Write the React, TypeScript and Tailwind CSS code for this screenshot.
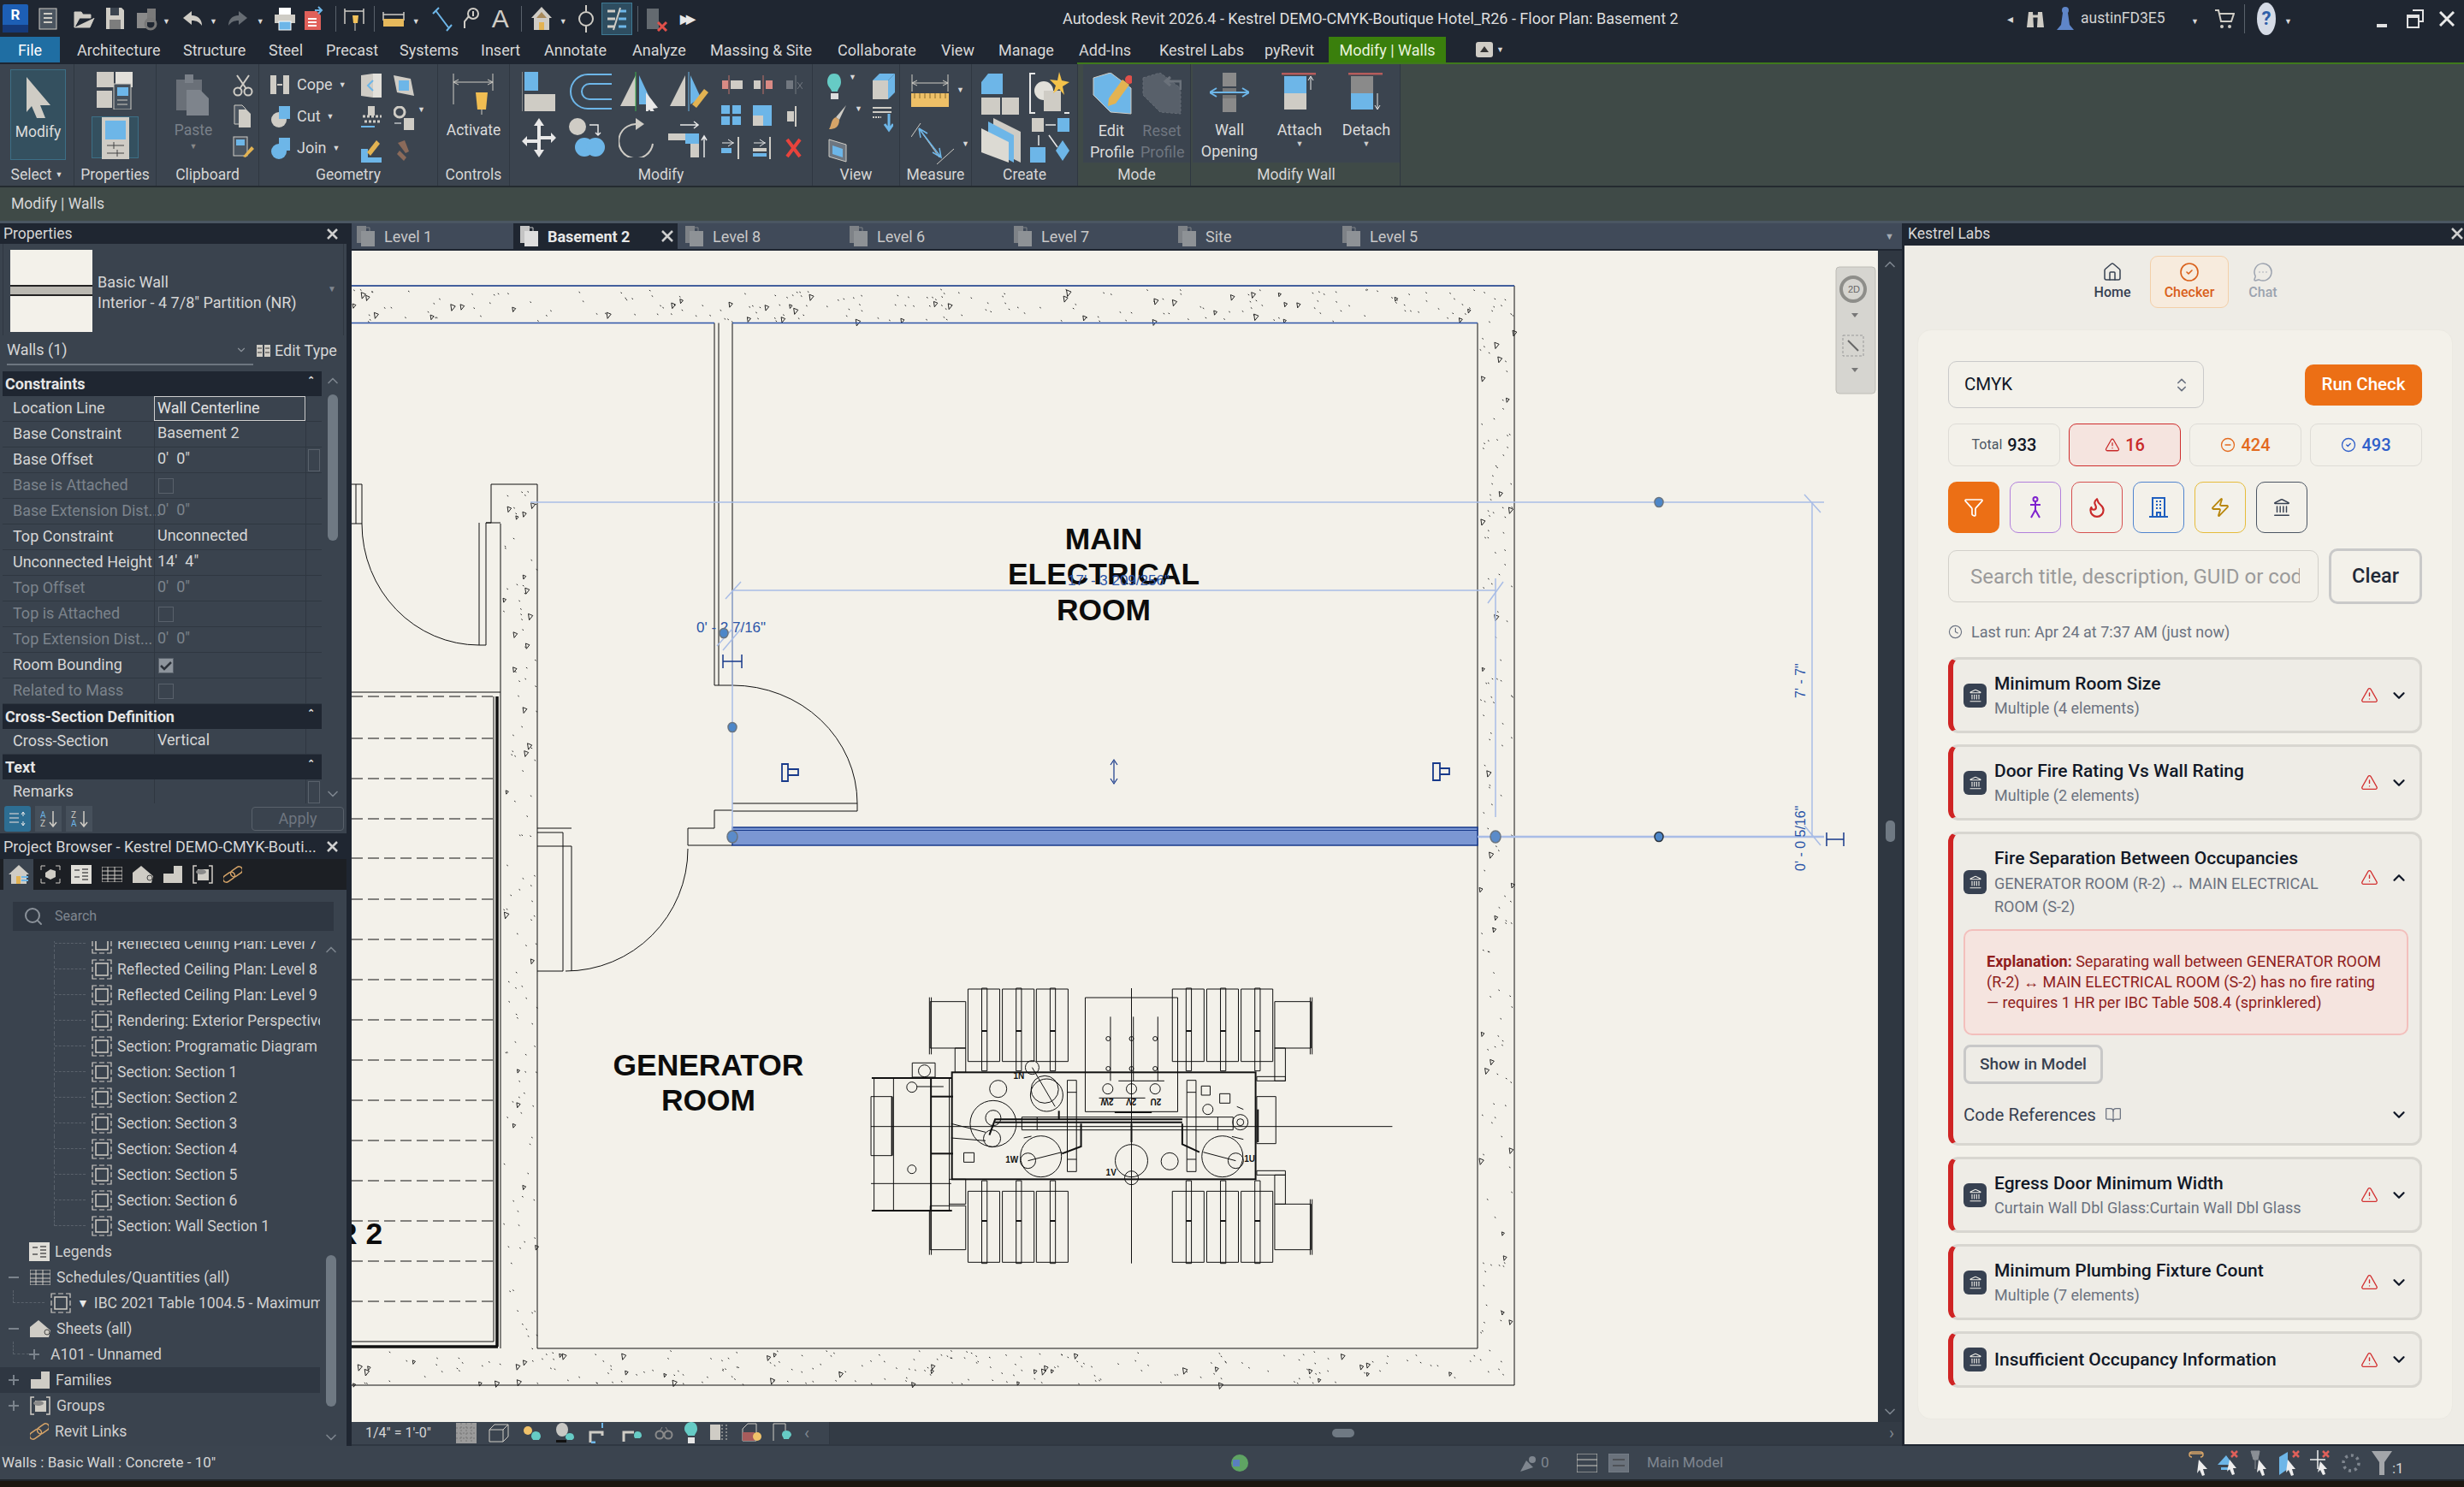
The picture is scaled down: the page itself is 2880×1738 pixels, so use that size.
import type { ReactNode } from "react";
import {
  BookOpen, ChevronDown, ChevronsUpDown, ChevronUp, CircleCheck, CircleMinus, Clock,
  Flame, Funnel, House, Landmark, MessageCircleMore, Search, TriangleAlert, Zap,
} from "lucide-react";

const G = "#cfccc5";
const B = "#6db6e8";

function Ic({ w, h, children, className }: { w: number; h: number; children: ReactNode; className?: string }) {
  return (
    <svg width={w} height={h} viewBox={`0 0 ${w} ${h}`} className={`shrink-0 ${className ?? ""}`}>
      {children}
    </svg>
  );
}

const Caret = () => <span className="text-[9px] leading-none text-[#d9d9d9]">▼</span>;

/* ---------- quick access toolbar ---------- */
function Qat() {
  return (
    <div className="flex h-full w-[830px] items-center pl-[3px]">
      <div className="flex h-[33px] w-[30px] flex-col items-center rounded-[2px] bg-[#1d5fb5]">
        <span className="mt-[1px] text-[17px] font-bold leading-[22px] text-white">R</span>
        <span className="mt-auto h-[9px] w-full bg-[#153a7a]" />
      </div>
      <Ic w={22} h={26} className="ml-[12px]"><rect x="1" y="1" width="20" height="24" fill="#4b5560" stroke={G} /><path d="M6 7h10M6 12h10M6 17h10" stroke={G} strokeWidth="2" /></Ic>
      <Ic w={26} h={24} className="ml-[18px]"><path d="M2 22V4h8l2 3h9v4H8L2 22h18l5-11" fill={G} stroke={G} /></Ic>
      <Ic w={23} h={27} className="ml-[12px]"><path d="M1 1h18l3 3v22H1z" fill={G} /><rect x="6" y="1" width="10" height="9" fill="#3b444f" /><rect x="5" y="15" width="13" height="11" fill="#7d7d7d" /></Ic>
      <Ic w={30} h={28} className="ml-[12px]"><rect x="2" y="7" width="12" height="18" fill="#8a8a8a" /><rect x="14" y="2" width="10" height="16" fill="#7a7a7a" /><circle cx="18" cy="20" r="6" fill="none" stroke="#777" strokeWidth="3" /></Ic>
      <span className="ml-[2px]"><Caret /></span>
      <Ic w={25} h={20} className="ml-[14px]"><path d="M11 1 1 9l10 8v-5c6 0 9 2 12 6 0-7-4-12-12-12z" fill={G} /></Ic>
      <span className="ml-[7px]"><Caret /></span>
      <Ic w={25} h={20} className="ml-[11px]"><path d="M14 1l10 8-10 8v-5C8 12 5 14 2 18 2 11 6 6 14 6z" fill="#666c73" /></Ic>
      <span className="ml-[10px]"><Caret /></span>
      <Ic w={26} h={28} className="ml-[11px]"><rect x="6" y="1" width="14" height="8" fill="#fff" /><rect x="1" y="9" width="24" height="10" fill={G} /><rect x="6" y="17" width="14" height="10" fill={B} stroke="#fff" /></Ic>
      <Ic w={25} h={29} className="ml-[9px]"><path d="M1 6h14l5 5v17H1z" fill="#e0605a" /><path d="M5 15h10M5 19h10M5 23h10" stroke="#fff" strokeWidth="2" /><path d="M13 5h8m-4-4 4 4-4 4" stroke={B} strokeWidth="2" fill="none" /></Ic>
      <span className="ml-[12px] h-[30px] w-px bg-[#59616b]" />
      <Ic w={24} h={32} className="ml-[9px]"><path d="M1 4v18M23 4v18M1 7h22" stroke={G} fill="none" strokeWidth="1.5" /><path d="M10 12h7l-1 9h-5z" fill="#f3c25a" /><path d="M13 21v9" stroke={G} /></Ic>
      <span className="ml-[11px] h-[30px] w-px bg-[#59616b]" />
      <Ic w={26} h={26} className="ml-[9px]"><path d="M1 5v10M25 5v10M1 8h24" stroke={G} fill="none" strokeWidth="1.5" /><rect x="1" y="13" width="24" height="9" fill="#e6b95c" /></Ic>
      <span className="ml-[9px]"><Caret /></span>
      <Ic w={24} h={30} className="ml-[14px]"><path d="M1 9 8 2M23 22l-6 7M4 5l15 20" stroke={B} strokeWidth="2" fill="none" /></Ic>
      <Ic w={20} h={30} className="ml-[11px]"><circle cx="13" cy="9" r="6" fill="none" stroke={G} strokeWidth="2" /><path d="M8 12 3 18v8M13 6v6" stroke={G} strokeWidth="2" fill="none" /></Ic>
      <span className="ml-[15px] w-[22px] font-['Liberation_Sans',sans-serif] text-[30px] leading-none text-[#cfccc5]">A</span>
      <span className="ml-[12px] h-[30px] w-px bg-[#59616b]" />
      <Ic w={26} h={30} className="ml-[10px]"><path d="M13 1 1 14h3v14h18V14h3z" fill={G} /><path d="M7 14 13 7l6 7" fill="#a88a5b" /><rect x="10" y="19" width="6" height="9" fill="#e3b352" /></Ic>
      <span className="ml-[8px]"><Caret /></span>
      <Ic w={20} h={34} className="ml-[12px]"><circle cx="10" cy="17" r="8" fill="none" stroke={G} strokeWidth="2" /><path d="M10 1v7M10 26v7" stroke={G} strokeWidth="2" /></Ic>
      <div className="ml-[8px] flex h-[38px] w-[36px] items-center justify-center border border-[#3e7a94] bg-[#2e4d60]">
        <Ic w={24} h={28}><path d="M1 5h9M1 14h9M1 23h9" stroke={G} strokeWidth="3" /><path d="M14 5h9M14 14h9M14 23h9" stroke={B} strokeWidth="3" /><path d="M16 1 8 27" stroke={G} strokeWidth="2" /></Ic>
      </div>
      <span className="ml-[6px] h-[30px] w-px bg-[#59616b]" />
      <Ic w={26} h={30} className="ml-[9px]"><rect x="1" y="3" width="14" height="24" fill="#646a70" /><path d="M14 19l10 10m0-10-10 10" stroke="#e0504a" strokeWidth="3" /></Ic>
      <span className="ml-[14px] text-[14px] font-bold leading-none tracking-[-4px] text-[#e8e8e8]">▶▶</span>
    </div>
  );
}

function TopRight() {
  return (
    <div className="flex h-full flex-1 items-center">
      <span className="ml-[384px] text-[14px] leading-none text-[#d8d8d8]">◂</span>
      <Ic w={24} h={22} className="ml-[14px]"><path d="M2 21 4 3h5l1 18zM14 21l1-18h5l2 18z" fill={G} /><path d="M9 8h6" stroke={G} strokeWidth="3" /></Ic>
      <Ic w={22} h={30} className="ml-[12px]"><circle cx="11" cy="5" r="4" fill="#5f86c9" /><path d="M8 8h6l2 14 5 6H1l5-6z" fill="#5f86c9" /></Ic>
      <span className="ml-[7px] w-[99px] text-[17.5px] text-[#d2d2d2]">austinFD3E5</span>
      <span className="ml-[30px]"><Caret /></span>
      <Ic w={24} h={24} className="ml-[18px]"><path d="M1 2h4l3 13h12l3-9H6" fill="none" stroke={G} strokeWidth="2" /><circle cx="9" cy="21" r="2" fill={G} /><circle cx="18" cy="21" r="2" fill={G} /></Ic>
      <span className="ml-[11px] h-[34px] w-px bg-[#59616b]" />
      <div className="ml-[14px] flex h-[38px] w-[22px] items-center justify-center rounded-[50%] bg-[#d5dbe6] text-[22px] font-bold text-[#2e5ea8]">?</div>
      <span className="ml-[10px]"><Caret /></span>
      <span className="ml-[99px] mt-[16px] h-[4px] w-[12px] bg-[#e2e2e2]" />
      <Ic w={20} h={22} className="ml-[23px]"><path d="M7 1h12v13h-4M1 7h13v14H1zM1 9h13" fill="none" stroke="#e2e2e2" strokeWidth="2" /></Ic>
      <Ic w={18} h={18} className="ml-[18px]"><path d="M1 1l16 16M17 1 1 17" stroke="#e8e8e8" strokeWidth="3" /></Ic>
    </div>
  );
}

/* ---------- ribbon tabs ---------- */
const leftTabs = [
  { t: "Architecture", c: "w-[124px]" }, { t: "Structure", c: "w-[100px]" }, { t: "Steel", c: "w-[67px]" },
  { t: "Precast", c: "w-[86px]" }, { t: "Systems", c: "w-[95px]" }, { t: "Insert", c: "w-[74px]" },
  { t: "Annotate", c: "w-[103px]" }, { t: "Analyze", c: "w-[91px]" }, { t: "Massing & Site", c: "w-[149px]" },
  { t: "Collaborate", c: "w-[121px]" }, { t: "View", c: "w-[67px]" }, { t: "Manage", c: "w-[92px]" },
];
const rightTabs = [
  { t: "Add-Ins", c: "w-[94px]" }, { t: "Kestrel Labs", c: "w-[123px]" }, { t: "pyRevit", c: "w-[75px]" },
];

function RibbonTabs() {
  return (
    <div className="flex h-[32px] text-[18px] text-[#d8d8d8]">
      <div className="flex w-[1259px] items-start">
        <div className="flex h-[30px] w-[70px] items-center justify-center bg-[#1f6ea3] text-white">File</div>
        <div className="ml-[20px] flex h-[30px] items-center">
          {leftTabs.map((x) => <span key={x.t} className={x.c}>{x.t}</span>)}
        </div>
      </div>
      <div className="flex flex-1 border-b-[2px] border-[#3f7a1c]">
        <div className="ml-[2px] flex h-[30px] items-center">
          {rightTabs.map((x) => <span key={x.t} className={x.c}>{x.t}</span>)}
        </div>
        <div className="flex h-[30px] w-[137px] items-center justify-center bg-[#3a7f0c] text-[#e8f3dc]">Modify | Walls</div>
        <div className="ml-[35px] flex h-[30px] items-center gap-[4px]">
          <Ic w={20} h={20}><rect x="0" y="1" width="20" height="18" rx="3" fill={G} /><path d="M10 6l5 7H5z" fill="#333" /></Ic>
          <Caret />
        </div>
      </div>
    </div>
  );
}

/* ---------- ribbon panels ---------- */
function Panel({ w, label, children, ctx }: { w: string; label: ReactNode; children?: ReactNode; ctx?: boolean }) {
  return (
    <div className={`flex h-full shrink-0 flex-col border-r border-[#2f3741] ${w} ${ctx ? "bg-[#3f4a47]" : "bg-[#3b444f]"}`}>
      <div className="h-[115px] bg-[#3b444f]">{children}</div>
      <div className="flex h-[27px] items-center justify-center pt-[2px] text-[17.5px] text-[#d6d6d6]">{label}</div>
    </div>
  );
}

const Cut = () => <Ic w={24} h={26}><path d="M5 1l11 16M19 1 8 17" stroke={G} strokeWidth="2" /><circle cx="6" cy="20" r="4.5" fill="none" stroke={G} strokeWidth="2" /><circle cx="18" cy="20" r="4.5" fill="none" stroke={G} strokeWidth="2" /></Ic>;
const Copy = () => <Ic w={22} h={28}><path d="M2 1h9l4 4v18H2z" fill="#4b5560" stroke={G} /><path d="M7 6h9l5 5v16H7z" fill={G} /></Ic>;
const MatchProps = () => <Ic w={26} h={26}><rect x="1" y="1" width="16" height="22" fill="#4b5560" stroke={G} /><rect x="4" y="4" width="10" height="7" fill={B} /><path d="M12 24 22 12l3 3-10 10z" fill="#e3b352" /></Ic>;

function Ribbon() {
  return (
    <div className="flex h-[142px] bg-[#3f4a47]">
      <Panel w="w-[87px]" label={<span className="flex items-center gap-[4px]">Select <Caret /></span>}>
        <div className="pl-[12px] pt-[6px]">
          <div className="flex h-[106px] w-[65px] flex-col items-center border border-[#3c6f86] bg-[#34505f] pt-[8px]">
            <Ic w={32} h={48}><path d="M2 0l28 33H18l6 15h-10L8 34l-6 7z" fill={G} /></Ic>
            <span className="mt-[3px] text-[17.5px] text-[#dcdcdc]">Modify</span>
          </div>
        </div>
      </Panel>
      <Panel w="w-[96px]" label="Properties">
        <div className="flex flex-col items-center pt-[9px]">
          <Ic w={44} h={44}><rect x="0" y="0" width="20" height="18" fill={G} /><rect x="22" y="0" width="20" height="18" fill="#e2e0da" /><rect x="0" y="22" width="18" height="20" fill={G} /><rect x="20" y="14" width="20" height="30" fill="#45505b" stroke={G} /><rect x="24" y="18" width="13" height="10" fill={B} /><path d="M24 33h12M24 38h12" stroke={G} /></Ic>
          <div className="mt-[8px] flex h-[49px] w-[55px] items-start justify-center border border-[#3c6f86] bg-[#34505f]">
            <Ic w={40} h={49}><rect x="4" y="0" width="32" height="49" fill={G} /><rect x="8" y="4" width="24" height="22" fill={B} /><path d="M10 33h20M10 42h20M18 29v8M22 38v8" stroke="#444" /></Ic>
          </div>
        </div>
      </Panel>
      <Panel w="w-[120px]" label="Clipboard">
        <div className="flex pl-[22px] pt-[12px]">
          <div className="flex w-[42px] flex-col items-center">
            <Ic w={40} h={48}><rect x="0" y="6" width="30" height="36" fill="#6a7078" /><rect x="10" y="0" width="10" height="10" fill="#7a8088" /><path d="M12 18h16l10 10v20H12z" fill="#7e848c" /></Ic>
            <span className="mt-[4px] text-[17.5px] text-[#798089]">Paste</span>
            <span className="text-[9px] text-[#888]">▼</span>
          </div>
          <div className="ml-[25px] flex flex-col gap-[9px]"><Cut /><Copy /><MatchProps /></div>
        </div>
      </Panel>
      <Panel w="w-[209px]" label="Geometry">
        <div className="flex pl-[13px] pt-[11px]">
          <div className="flex w-[106px] flex-col gap-[11px] text-[18px] leading-[26px] text-[#d8d8d8]">
            <div className="flex items-center gap-[7px]">
              <Ic w={24} h={26}><rect x="0" y="2" width="7" height="22" fill={G} /><rect x="15" y="2" width="7" height="22" fill={G} /><path d="M8 13h6" stroke={G} strokeWidth="2" /></Ic>Cope<Caret />
            </div>
            <div className="flex items-center gap-[7px]">
              <Ic w={24} h={26}><circle cx="10" cy="17" r="9" fill={G} /><rect x="10" y="1" width="13" height="15" fill={B} /></Ic>Cut<Caret />
            </div>
            <div className="flex items-center gap-[7px]">
              <Ic w={24} h={26}><circle cx="10" cy="17" r="9" fill={B} /><rect x="10" y="1" width="13" height="15" fill={B} /></Ic>Join<Caret />
            </div>
          </div>
          <div className="flex w-[38px] flex-col gap-[10px]">
            <Ic w={24} h={28}><path d="M0 2 14 0v28L0 26z" fill={G} /><path d="M14 0h10v28H14z" fill="#e2e0da" /><path d="M14 8 8 14l6 6" stroke={B} strokeWidth="2" fill="none" /></Ic>
            <Ic w={24} h={28}><path d="M2 12h22M4 18h20" stroke={G} strokeWidth="3" strokeDasharray="3 2" /><rect x="8" y="0" width="8" height="11" fill={G} /><path d="M0 24h16" stroke={B} strokeWidth="2" /></Ic>
            <Ic w={24} h={28}><rect x="0" y="12" width="8" height="16" fill={B} /><path d="M8 22h16v6H8z" fill={B} /><path d="M7 16 18 2l4 4-11 14z" fill="#e3b352" /></Ic>
          </div>
          <div className="flex flex-col gap-[10px]">
            <Ic w={24} h={28}><path d="M0 2l20 4 4 20-20-4z" fill={G} /><rect x="6" y="8" width="12" height="12" fill={B} /></Ic>
            <span className="flex items-start gap-[4px]">
              <Ic w={24} h={28}><circle cx="7" cy="7" r="6" fill="none" stroke={G} strokeWidth="3" /><rect x="12" y="14" width="12" height="14" fill={G} /><path d="M1 20h8" stroke="#fff" /></Ic>
              <Caret />
            </span>
            <Ic w={24} h={28}><path d="M12 26 4 18l3-4 8 8z" fill="#8a6a5a" /><path d="M5 5l8-3 5 13-4 2z" fill="#8a6a5a" /></Ic>
          </div>
        </div>
      </Panel>
      <Panel w="w-[84px]" label="Controls">
        <div className="flex flex-col items-center pt-[11px]">
          <Ic w={52} h={48}><path d="M2 0v36M48 0v20M2 10h46M2 10l6-3M2 10l6 3M48 10l-6-3M48 10l-6 3" stroke={G} fill="none" /><path d="M28 22h14l-2 20H30z" fill="#f0bd52" /><path d="M35 42v6" stroke={G} /></Ic>
          <span className="mt-[5px] text-[17.5px] text-[#dcdcdc]">Activate</span>
        </div>
      </Panel>
      <Panel w="w-[354px]" label="Modify">
        <div className="flex pl-[14px] pt-[9px]">
          <div className="grid grid-cols-[55px_58px_58px_58px] grid-rows-[48px_48px] gap-y-[6px]">
            <Ic w={40} h={46}><path d="M0 0v46" stroke={G} /><rect x="3" y="0" width="16" height="22" fill={B} /><rect x="3" y="26" width="36" height="20" fill={G} /></Ic>
            <Ic w={50} h={46}><path d="M50 3H22a20 20 0 0 0 0 40h28M50 14H24a8 8 0 0 0 0 18h26" fill="none" stroke={B} strokeWidth="2" /></Ic>
            <Ic w={48} h={46}><path d="M20 4 2 40h18z" fill={G} /><path d="M20 0v48" stroke="#3bb04a" /><path d="M24 4l16 34H24z" fill={B} /><path d="M32 24l14 18-6 1 4 7-4 1-4-7-4 5z" fill="#e8e8e8" /></Ic>
            <Ic w={48} h={46}><path d="M20 4 2 40h18z" fill={G} /><path d="M24 0v46" stroke={B} /><path d="M26 4l12 26-12 8z" fill={B} /><path d="M28 38 42 20l5 4-14 18z" fill="#e3b352" /></Ic>
            <Ic w={40} h={46}><path d="M20 0l6 9h-4v12h12v-4l6 6-6 6v-4H22v12h4l-6 9-6-9h4V29H6v4l-6-6 6-6v4h12V9h-4z" fill="#e8e8e8" /></Ic>
            <Ic w={44} h={46}><circle cx="10" cy="10" r="10" fill={G} /><path d="M24 8h10v12m-3-3 3 3 3-3" stroke="#e8e8e8" strokeWidth="1.5" fill="none" /><circle cx="18" cy="34" r="11" fill={B} /><circle cx="31" cy="34" r="11" fill={B} /></Ic>
            <Ic w={44} h={46}><path d="M26 8A20 20 0 1 0 40 30" fill="none" stroke={G} strokeWidth="2" /><path d="M20 0l10 7-10 7z" fill={G} /></Ic>
            <Ic w={46} h={46}><path d="M0 18h30v8H0zM26 18h10v28h-10z" fill={G} /><rect x="20" y="18" width="16" height="12" fill={B} /><path d="M14 8h20m-4-4 5 4-5 4M42 46V22m-3 4 3-5 3 5" stroke="#e8e8e8" fill="none" strokeWidth="1.5" /></Ic>
          </div>
          <div className="ml-[4px] grid grid-cols-[37px_38px_30px] grid-rows-[30px_30px_30px] items-center gap-y-[7px]">
            <Ic w={26} h={22}><rect x="1" y="6" width="7" height="10" fill="#d98a84" /><rect x="11" y="6" width="14" height="10" fill={G} /><path d="M9 0v22" stroke="#c0706a" /></Ic>
            <Ic w={26} h={22}><rect x="1" y="6" width="8" height="10" fill={G} /><rect x="15" y="6" width="8" height="10" fill="#d98a84" /><path d="M12 0v22" stroke="#c0706a" /></Ic>
            <Ic w={20} h={22}><rect x="1" y="6" width="8" height="10" fill="#727880" /><path d="M12 0v22M14 8l6 8M20 8l-6 8" stroke="#727880" /></Ic>
            <Ic w={24} h={26}><rect x="0" y="0" width="10" height="10" fill={B} /><rect x="13" y="0" width="10" height="10" fill={B} /><rect x="0" y="13" width="10" height="10" fill={B} /><rect x="13" y="13" width="10" height="10" fill={B} /></Ic>
            <Ic w={24} h={26}><path d="M0 0h22v24H12V12H0z" fill={B} /><rect x="0" y="12" width="12" height="12" fill={G} /></Ic>
            <Ic w={20} h={24}><rect x="2" y="6" width="8" height="12" fill={G} /><path d="M12 0v24" stroke={G} strokeWidth="2" /></Ic>
            <Ic w={26} h={28}><path d="M1 8h14M8 4l6 4-6 4" stroke="#e8e8e8" fill="none" /><rect x="0" y="14" width="12" height="6" fill={B} /><path d="M20 1v26" stroke={G} strokeWidth="2" /></Ic>
            <Ic w={26} h={28}><path d="M1 8h14M8 4l6 4-6 4" stroke="#e8e8e8" fill="none" /><rect x="0" y="14" width="16" height="4" fill={G} /><rect x="0" y="20" width="16" height="4" fill={B} /><path d="M20 1v26" stroke={G} strokeWidth="2" /></Ic>
            <Ic w={20} h={26}><path d="M2 3l15 20M17 3 2 23" stroke="#e8433c" strokeWidth="4" /></Ic>
          </div>
        </div>
      </Panel>
      <Panel w="w-[102px]" label="View">
        <div className="ml-[17px] mt-[11px] grid grid-cols-[53px_30px] grid-rows-[36px_36px_36px] gap-y-[1px]">
          <span className="flex gap-[8px]">
            <Ic w={17} h={30}><path d="M8 0c6 0 8 5 8 10s-4 8-4 11H5c0-3-5-6-5-11S2 0 8 0z" fill="#66cbc5" /><rect x="4" y="23" width="9" height="7" fill="#ddd" /></Ic>
            <Caret />
          </span>
          <Ic w={26} h={30}><path d="M0 8h18v22H0z" fill={G} /><path d="M0 8l8-8h18L18 8z" fill={B} /><path d="M18 8l8-8v22l-8 8z" fill={B} /></Ic>
          <span className="flex gap-[8px]">
            <Ic w={24} h={30}><path d="M22 0 10 14l4 3z" fill={G} /><path d="M10 14c-6 2-5 10-8 14 6 0 12-2 12-11z" fill="#d6a468" /></Ic>
            <Caret />
          </span>
          <Ic w={24} h={32}><path d="M0 3h22M0 8h22" stroke={G} strokeWidth="2" /><path d="M0 14h10" stroke={G} strokeWidth="2" strokeDasharray="2 1" /><path d="M19 10v18m-5-6 5 7 5-7" stroke={B} strokeWidth="3" fill="none" /></Ic>
          <Ic w={24} h={32}><path d="M2 3l20 6v20L2 23z" fill="#6d7680" stroke={G} /><path d="M6 10l12 4v10L6 20z" fill={B} /></Ic>
        </div>
      </Panel>
      <Panel w="w-[84px]" label="Measure">
        <div className="ml-[13px] mt-[8px] flex flex-col gap-[17px]">
          <span className="flex items-center gap-[9px]">
            <Ic w={44} h={44}><path d="M1 4v20M43 4v20M1 14h42M1 14l6-3M1 14l6 3M43 14l-6-3M43 14l-6 3" stroke={G} fill="none" /><path d="M0 26h44v16H0z" fill="#eec067" /><path d="M4 26v6M10 26v6M16 26v6M22 26v6M28 26v6M34 26v6M40 26v6" stroke="#8a6a2a" /></Ic>
            <Caret />
          </span>
          <span className="flex items-center gap-[9px]">
            <Ic w={50} h={48}><path d="M0 16 11 0M30 48 50 30M9 6l24 34" stroke={G} fill="none" /><path d="M9 6l26 34m-10-6 10 6-2-11M9 6l2 11M9 6l10 6" stroke={B} fill="none" strokeWidth="1.5" /></Ic>
            <Caret />
          </span>
        </div>
      </Panel>
      <Panel w="w-[124px]" label="Create">
        <div className="ml-[11px] mt-[9px] grid grid-cols-[55px_50px] grid-rows-[50px_50px] gap-y-[4px]">
          <Ic w={46} h={50}><path d="M0 12 8 2h17v24H0z" fill={B} /><path d="M0 30h22v20H0zM24 30h20v20H24z" fill={G} /></Ic>
          <Ic w={50} h={50}><path d="M8 2H2v46h6M42 48h6" stroke="#e8e8e8" strokeWidth="2" fill="none" /><circle cx="18" cy="22" r="11" fill="#e2e0da" /><rect x="18" y="22" width="20" height="24" fill={G} /><path d="M36 0l3 10 9 2-8 5 2 10-6-7-7 5 3-9-7-7 9 1z" fill="#f4c24a" /></Ic>
          <Ic w={48} h={52}><path d="M14 0 46 16v36L14 36z" fill={G} /><path d="M8 4l30 16v32L8 36z" fill={B} /><path d="M0 12l32 16v24L0 40z" fill="#dcdad3" /></Ic>
          <Ic w={50} h={52}><rect x="4" y="0" width="14" height="16" fill={G} /><rect x="34" y="0" width="14" height="16" fill={B} /><path d="M20 8h12M12 20v12M24 20l10 14" stroke="#e8e8e8" strokeWidth="1.5" /><rect x="2" y="34" width="18" height="18" fill={B} /><path d="M40 26l8 12-8 12-8-12z" fill={B} /></Ic>
        </div>
      </Panel>
      <div className="w-[6px] shrink-0" />
      <Panel ctx w="w-[126px]" label="Mode">
        <div className="flex flex-col items-center pt-[10px]">
          <div className="flex gap-[11px]">
            <Ic w={47} h={50}><path d="M2 6 22 0l24 18v30L22 46 2 26z" fill={B} stroke={G} /><path d="M20 30 36 8l8 6-16 22-9 3z" fill="#e3b352" /><circle cx="44" cy="8" r="5" fill="#e0504a" /></Ic>
            <Ic w={47} h={50}><path d="M2 6 22 0l24 18v30L22 46 2 26z" fill="#58606a" stroke="#666d76" strokeDasharray="3 2" /><path d="M46 20V10H30m4-5-6 5 6 5" stroke="#6a717a" strokeWidth="3" fill="none" /></Ic>
          </div>
          <div className="mt-[5px] flex gap-[9px] text-center text-[18px] leading-[25px]">
            <span className="w-[50px] text-[#dcdcdc]">Edit<br />Profile</span>
            <span className="w-[50px] text-[#6f7680]">Reset<br />Profile</span>
          </div>
        </div>
      </Panel>
      <div className="w-[2px] shrink-0" />
      <Panel ctx w="w-[243px]" label="Modify Wall">
        <div className="flex pt-[10px]">
          <div className="flex w-[86px] flex-col items-center">
            <Ic w={46} h={46}><rect x="15" y="0" width="16" height="16" fill="#8a8a8a" /><rect x="15" y="30" width="16" height="16" fill="#8a8a8a" /><rect x="15" y="18" width="16" height="4" fill="#777" /><rect x="15" y="26" width="16" height="4" fill="#777" /><path d="M0 23h46M0 23l8-5M0 23l8 5M46 23l-8-5M46 23l-8 5" stroke={B} strokeWidth="2" fill="none" /></Ic>
            <span className="mt-[8px] text-center text-[18px] leading-[25px] text-[#dcdcdc]">Wall<br />Opening</span>
          </div>
          <div className="flex w-[78px] flex-col items-center">
            <Ic w={42} h={44}><path d="M0 1h40" stroke="#b55c5c" strokeWidth="3" /><rect x="3" y="4" width="26" height="20" fill={B} /><rect x="3" y="24" width="26" height="19" fill={G} /><path d="M34 20V5m-3 4 3-5 3 5" stroke="#e8e8e8" fill="none" /></Ic>
            <span className="mt-[10px] text-[18px] leading-[25px] text-[#dcdcdc]">Attach</span>
            <span className="text-[9px] leading-none text-[#ccc]">▼</span>
          </div>
          <div className="flex w-[78px] flex-col items-center">
            <Ic w={42} h={44}><path d="M0 1h40" stroke="#b55c5c" strokeWidth="3" /><rect x="3" y="4" width="26" height="20" fill="#8a8a8a" /><rect x="3" y="24" width="26" height="19" fill={B} /><path d="M34 24v18m-3-4 3 5 3-5" stroke="#e8e8e8" fill="none" /></Ic>
            <span className="mt-[10px] text-[18px] leading-[25px] text-[#dcdcdc]">Detach</span>
            <span className="text-[9px] leading-none text-[#ccc]">▼</span>
          </div>
        </div>
      </Panel>
    </div>
  );
}

/* ---------- properties ---------- */
const CloseX = ({ s = 13 }: { s?: number }) => (
  <Ic w={s} h={s}><path d={`M1 1 ${s - 1} ${s - 1}M${s - 1} 1 1 ${s - 1}`} stroke="#cfcfcf" strokeWidth="2.5" /></Ic>
);

const Box = ({ checked }: { checked?: boolean }) => (
  <span className={`flex h-[18px] w-[18px] items-center justify-center border border-[#59616b] ${checked ? "bg-[#8d949c]" : ""}`}>
    {checked && <Ic w={14} h={12}><path d="M1 6l4 4 8-8" fill="none" stroke="#2c323a" strokeWidth="2.5" /></Ic>}
  </span>
);

type Prop = { l: string; v?: string; off?: boolean; box?: boolean; checked?: boolean; sel?: boolean; btn?: boolean };
const constraintRows: Prop[] = [
  { l: "Location Line", v: "Wall Centerline", sel: true },
  { l: "Base Constraint", v: "Basement 2" },
  { l: "Base Offset", v: "0'  0\"", btn: true },
  { l: "Base is Attached", off: true, box: true },
  { l: "Base Extension Dist...", v: "0'  0\"", off: true },
  { l: "Top Constraint", v: "Unconnected" },
  { l: "Unconnected Height", v: "14'  4\"" },
  { l: "Top Offset", v: "0'  0\"", off: true },
  { l: "Top is Attached", off: true, box: true },
  { l: "Top Extension Dist...", v: "0'  0\"", off: true },
  { l: "Room Bounding", box: true, checked: true },
  { l: "Related to Mass", off: true, box: true },
];

function PropRow({ p }: { p: Prop }) {
  const color = p.off ? "text-[#7c838c]" : "text-[#d6d6d6]";
  return (
    <div className={`flex h-[30px] border-b border-[#2f3741] ${color}`}>
      <div className="w-[176px] shrink-0 whitespace-pre pl-[12px] leading-[28px]">{p.l}</div>
      <div className={`ml-[1px] w-[177px] whitespace-pre border-l border-[#2f3741] pl-[3px] leading-[26px] ${p.sel ? "border border-[#cfcfcf] text-[#e2e2e2]" : ""}`}>
        {p.box ? <span className="flex h-full items-center pl-[1px]"><Box checked={p.checked} /></span> : p.v}
      </div>
      <div className="flex flex-1 items-center justify-center border-l border-[#2f3741]">
        {p.btn && <span className="h-[26px] w-[14px] border border-[#59616b]" />}
      </div>
    </div>
  );
}

const SectionHeader = ({ t }: { t: string }) => (
  <div className="flex h-[29px] items-center justify-between bg-[#1f2631] pl-[3px] pr-[8px] font-bold text-[#e6e6e6]">
    <span>{t}</span>
    <span className="mb-[8px] text-[11px] font-bold leading-none text-[#ddd]">⌃</span>
  </div>
);

function Properties() {
  return (
    <div className="flex h-[713px] flex-col text-[18px]">
      <div className="flex h-[24px] shrink-0 items-center justify-between bg-[#1f2631] pl-[4px] pr-[10px] text-[17.5px] text-[#d6d6d6]">
        <span>Properties</span><CloseX />
      </div>
      <div className="mx-[3px] flex h-[107px] shrink-0 items-center border-x border-[#2f3741] pl-[8px] pr-[8px] pt-[2px]">
        <div className="flex h-[96px] w-[96px] shrink-0 flex-col justify-center bg-[#f3f1ea]">
          <div className="h-[13px] border-y-2 border-[#222] bg-[#bab8b1]" />
        </div>
        <div className="ml-[6px] mt-[5px] flex-1 leading-[24px] text-[#d6d6d6]">Basic Wall<br />Interior - 4 7/8" Partition (NR)</div>
        <span className="mb-[4px] text-[10px] text-[#7f868f]">▼</span>
      </div>
      <div className="flex h-[35px] shrink-0 items-center pl-[8px] text-[#d6d6d6]">
        <div className="flex h-full w-[288px] items-center justify-between border-b-2 border-[#6d7680] pr-[7px]">
          <span>Walls (1)</span><ChevronDown size={14} color="#8a9199" />
        </div>
        <div className="ml-[4px] flex items-center gap-[5px]">
          <Ic w={16} h={14}><rect x="0" y="0" width="7" height="14" fill={G} /><rect x="9" y="0" width="7" height="14" fill={G} /><path d="M1 4h5M1 9h5M10 4h5M10 9h5" stroke="#333" /></Ic>
          Edit Type
        </div>
      </div>
      <div className="mt-[7px] flex h-[505px] shrink-0 pl-[3px]">
        <div className="w-[373px] overflow-hidden">
          <SectionHeader t="Constraints" />
          {constraintRows.map((p) => <PropRow key={p.l} p={p} />)}
          <SectionHeader t="Cross-Section Definition" />
          <PropRow p={{ l: "Cross-Section", v: "Vertical" }} />
          <SectionHeader t="Text" />
          <PropRow p={{ l: "Remarks", btn: true }} />
        </div>
        <div className="flex w-[26px] flex-col items-center">
          <ChevronUp size={20} color="#7d858e" className="mt-[1px]" />
          <div className="mt-[6px] h-[171px] w-[12px] rounded-[6px] bg-[#6f7983]" />
          <ChevronDown size={20} color="#7d858e" className="mt-auto mb-[1px]" />
        </div>
      </div>
      <div className="flex h-[35px] shrink-0 items-center gap-[5px] pl-[5px]">
        <div className="flex h-[30px] w-[31px] items-center justify-center rounded-[3px] bg-[#2d6e93]">
          <Ic w={20} h={18}><path d="M0 3h11M0 8h11M0 13h11" stroke="#8fa8b8" strokeWidth="2" /><path d="M16 1v5m-2-2 2-3 2 3M16 17v-5m-2 2 2 3 2-3" stroke="#e8e8e8" fill="none" /></Ic>
        </div>
        <div className="flex h-[30px] w-[31px] items-center justify-center bg-[#46505b]">
          <Ic w={20} h={20}><text x="0" y="9" fontSize="10" fill={B} fontFamily="Roboto">A</text><text x="0" y="19" fontSize="10" fill={G} fontFamily="Roboto">Z</text><path d="M15 1v17m-4-4 4 5 4-5" stroke={G} fill="none" strokeWidth="1.5" /></Ic>
        </div>
        <div className="flex h-[30px] w-[31px] items-center justify-center bg-[#46505b]">
          <Ic w={20} h={20}><text x="0" y="9" fontSize="10" fill={G} fontFamily="Roboto">Z</text><text x="0" y="19" fontSize="10" fill={B} fontFamily="Roboto">A</text><path d="M15 1v17m-4-4 4 5 4-5" stroke={G} fill="none" strokeWidth="1.5" /></Ic>
        </div>
        <div className="ml-auto mr-[3px] flex h-[28px] w-[108px] items-center justify-center rounded-[4px] border border-[#59616b] text-[#6f7680]">Apply</div>
      </div>
    </div>
  );
}

/* ---------- project browser ---------- */
const ViewIcon = () => (
  <Ic w={24} h={24}>
    <rect x="5" y="5" width="14" height="14" fill="none" stroke={G} strokeWidth="1.5" />
    <path d="M1 6V1h5M9 1h6M18 1h5v5M1 9v6M23 9v6M1 18v5h5M9 23h6M18 23h5v-5" fill="none" stroke={G} strokeWidth="1.2" />
  </Ic>
);
const ListIcon = () => <Ic w={24} h={22}><rect x="0" y="0" width="24" height="22" fill="#e0ded8" /><path d="M4 6h6M13 5h7M13 9h7M4 14h6M13 13h7M13 17h7" stroke="#555" strokeWidth="1.5" /></Ic>;
const SchedIcon = () => <Ic w={24} h={18}><rect x="0" y="0" width="24" height="18" fill="none" stroke={G} /><path d="M0 5h24M0 10h24M0 14h24M7 0v18M15 0v18" stroke={G} /></Ic>;
const SheetIcon = () => <Ic w={24} h={20}><path d="M0 8 10 0l14 12-2 8H0z" fill={G} /><circle cx="20" cy="14" r="3" fill="none" stroke="#444" /></Ic>;
const FamIcon = () => <Ic w={22} h={20}><rect x="0" y="9" width="22" height="11" fill={G} /><rect x="12" y="0" width="10" height="9" fill={G} /></Ic>;
const GroupIcon = () => <Ic w={24} h={24}><path d="M5 2H1v20h4M19 2h4v20h-4" stroke={G} fill="none" strokeWidth="1.5" /><rect x="6" y="6" width="13" height="13" fill={G} /><ellipse cx="10" cy="9" rx="6" ry="3" fill="#8a8a8a" /></Ic>;
const LinkIcon = () => <Ic w={22} h={20}><g fill="none" stroke="#d6a468" strokeWidth="1.5" transform="rotate(-35 11 10)"><rect x="-2" y="6" width="15" height="8" rx="4" /><rect x="9" y="6" width="15" height="8" rx="4" /></g></Ic>;

const viewRows = [
  "Reflected Ceiling Plan: Level 7", "Reflected Ceiling Plan: Level 8", "Reflected Ceiling Plan: Level 9",
  "Rendering: Exterior Perspective", "Section: Programatic Diagram", "Section: Section 1", "Section: Section 2",
  "Section: Section 3", "Section: Section 4", "Section: Section 5", "Section: Section 6", "Section: Wall Section 1",
];

const Row = ({ children, hover }: { children: ReactNode; hover?: boolean }) => (
  <div className={`flex h-[30px] shrink-0 items-center whitespace-nowrap ${hover ? "bg-[#2f3742]" : ""}`}>{children}</div>
);
const Pm = ({ t }: { t: "+" | "-" }) => (
  <Ic w={12} h={12}><path d={t === "+" ? "M0 6h12M6 0v12" : "M0 6h12"} stroke="#7b838c" strokeWidth="2" /></Ic>
);

function Browser() {
  return (
    <div className="flex flex-1 flex-col text-[17.6px] text-[#d0d0d0]">
      <div className="flex h-[30px] shrink-0 items-center justify-between bg-[#1f2631] pl-[4px] pr-[10px] text-[18px] text-[#d6d6d6]">
        <span>Project Browser - Kestrel DEMO-CMYK-Bouti...</span><CloseX />
      </div>
      <div className="flex h-[36px] shrink-0 items-center bg-[#1c1f24] pl-[4px] pr-[3px]">
        <div className="flex h-full w-[35px] items-center justify-center bg-[#3b444f]">
          <Ic w={24} h={22}><path d="M12 0 0 11h3v11h18V11h3z" fill={G} /><rect x="9" y="13" width="5" height="9" fill="#e3b352" /><path d="M15 14h8M15 18h8" stroke={B} strokeWidth="2" /></Ic>
        </div>
        <div className="ml-[8px] flex items-center gap-[12px]">
          <Ic w={24} h={22}><path d="M1 6V1h5M18 1h5v5M1 16v5h5M18 21h5v-5" stroke={G} fill="none" /><path d="M6 9l6-4 6 2v7l-6 3-6-3z" fill={G} /></Ic>
          <ListIcon />
          <SchedIcon />
          <SheetIcon />
          <FamIcon />
          <GroupIcon />
          <LinkIcon />
        </div>
      </div>
      <div className="mx-[15px] mt-[14px] flex h-[34px] shrink-0 items-center gap-[13px] bg-[#2f3742] pl-[12px] text-[16px] text-[#7f868f]">
        <Search size={24} color="#8a9199" />Search
      </div>
      <div className="mt-[12px] flex min-h-0 flex-1">
        <div className="w-[374px] overflow-hidden">
          <div className="mt-[-12px]">
            {viewRows.map((t, i) => (
              <Row key={t}>
                <div className={`ml-[63px] flex w-[44px] shrink-0 border-l border-dashed border-[#59616b] ${i === viewRows.length - 1 ? "h-[15px] self-start" : "h-full"}`}>
                  <div className="mr-[7px] h-[15px] flex-1 border-b border-dashed border-[#59616b]" />
                </div>
                <ViewIcon />
                <span className="ml-[6px]">{t}</span>
              </Row>
            ))}
            <Row><span className="ml-[34px]"><ListIcon /></span><span className="ml-[6px]">Legends</span></Row>
            <Row><span className="ml-[10px]"><Pm t="-" /></span><span className="ml-[13px]"><SchedIcon /></span><span className="ml-[7px]">Schedules/Quantities (all)</span></Row>
            <Row>
              <div className="ml-[15px] h-[15px] w-[37px] shrink-0 self-start border-b border-l border-dashed border-[#59616b]" />
              <span className="ml-[7px]"><ViewIcon /></span>
              <span className="ml-[7px] text-[14px] leading-none text-[#e8e8e8]">▼</span>
              <span className="ml-[6px]">IBC 2021 Table 1004.5 - Maximum Floor</span>
            </Row>
            <Row><span className="ml-[10px]"><Pm t="-" /></span><span className="ml-[13px]"><SheetIcon /></span><span className="ml-[7px]">Sheets (all)</span></Row>
            <Row>
              <div className="ml-[15px] h-[15px] w-[19px] shrink-0 self-start border-b border-l border-dashed border-[#59616b]" />
              <Pm t="+" /><span className="ml-[13px]">A101 - Unnamed</span>
            </Row>
            <Row hover><span className="ml-[10px]"><Pm t="+" /></span><span className="ml-[14px]"><FamIcon /></span><span className="ml-[7px]">Families</span></Row>
            <Row><span className="ml-[10px]"><Pm t="+" /></span><span className="ml-[13px]"><GroupIcon /></span><span className="ml-[7px]">Groups</span></Row>
            <Row><span className="ml-[35px]"><LinkIcon /></span><span className="ml-[7px]">Revit Links</span></Row>
          </div>
        </div>
        <div className="flex w-[26px] flex-col items-center">
          <ChevronUp size={20} color="#7d858e" />
          <div className="mt-[347px] h-[177px] w-[12px] rounded-[6px] bg-[#6f7983]" />
          <ChevronDown size={20} color="#7d858e" className="mt-auto" />
        </div>
      </div>
    </div>
  );
}

/* ---------- drawing ---------- */
function concrete(x0: number, y0: number, x1: number, y1: number, n: number, seed: number) {
  let s = seed;
  const r = () => {
    s = (s * 16807) % 2147483647;
    return s / 2147483647;
  };
  let d = "";
  for (let i = 0; i < n; i++) {
    const x = x0 + r() * (x1 - x0);
    const y = y0 + r() * (y1 - y0);
    if (i % 6 === 0) {
      const a = 3 + r() * 2.5;
      d += `M${x.toFixed(1)} ${y.toFixed(1)}l${a.toFixed(1)} ${(a * 0.4).toFixed(1)}l${(-a * 0.8).toFixed(1)} ${a.toFixed(1)}z`;
    } else {
      d += `M${x.toFixed(1)} ${y.toFixed(1)}l1.5 1`;
    }
  }
  return d;
}

const hatch =
  concrete(412, 338, 1768, 376, 230, 11) +
  concrete(1729, 378, 1768, 1576, 150, 29) +
  concrete(412, 1578, 1768, 1618, 230, 53) +
  concrete(588, 570, 627, 1576, 130, 77);

// transformer plan, noted in crop coordinates
const tx = (x: number) => 960 + x / 2.24;
const ty = (y: number) => 1100 + y / 3;
const rectPath = ([a, b, c, d]: number[]) => `M${tx(a)} ${ty(b)}H${tx(c)}V${ty(d)}H${tx(a)}Z`;
const line = (pts: number[]) => {
  let d = "";
  for (let i = 0; i < pts.length; i += 2) d += `${i === 0 ? "M" : "L"}${tx(pts[i])} ${ty(pts[i + 1])}`;
  return d;
};
const finX = [384, 474, 563, 919, 1009, 1099];
const fins = finX.flatMap((x) => [[x, 168, x + 83, 422], [x, 877, x + 83, 1126], [x + 36, 165, x + 50, 455], [x + 36, 840, x + 50, 1130]]);
const thinRects = [
  ...fins, [285, 212, 378, 375], [1187, 212, 1282, 375], [285, 928, 378, 1082], [1187, 922, 1282, 1082],
  [691, 198, 933, 598], [525, 617, 1078, 662], [1140, 545, 1190, 710], [373, 742, 400, 775], [995, 508, 1018, 540],
  [1043, 535, 1070, 568], [644, 488, 668, 808], [957, 488, 981, 808], [238, 427, 298, 477], [130, 545, 185, 752],
  [138, 480, 335, 945], [350, 375, 378, 460], [1187, 375, 1215, 490], [1140, 475, 1215, 490], [1140, 805, 1215, 820],
  [1187, 820, 1215, 922], [335, 835, 378, 922],
];
const thinLines = [
  [812, 165, 812, 1130], [130, 650, 1495, 650], [189, 480, 189, 945], [130, 850, 340, 850], [757, 265, 757, 490],
  [817, 265, 817, 490], [881, 265, 881, 490], [565, 617, 565, 662], [1038, 617, 1038, 662], [283, 197, 283, 397],
  [288, 197, 288, 397], [1280, 197, 1280, 397], [1285, 197, 1285, 397], [283, 945, 283, 1100], [288, 945, 288, 1100],
  [1280, 905, 1280, 1100], [1285, 905, 1285, 1100], [644, 530, 668, 530], [644, 765, 668, 765], [957, 530, 981, 530],
  [957, 765, 981, 765], [340, 640, 430, 670], [340, 690, 430, 700], [552, 443, 612, 580], [541, 770, 630, 740],
  [1085, 770, 1000, 740], [250, 510, 320, 510], [778, 490, 898, 490], [727, 550, 848, 550], [530, 690, 550, 684], [1075, 685, 1105, 695],
  [1088, 580, 1105, 590],
];
const thickLines = [
  [287, 480, 287, 945], [132, 480, 342, 480], [132, 945, 342, 945], [185, 545, 185, 752], [768, 600, 865, 600],
  [440, 680, 455, 625, 945, 625], [455, 635, 945, 635], [680, 640, 680, 720, 630, 745], [945, 640, 945, 712, 990, 740],
  [812, 640, 812, 705], [622, 595, 622, 625], [287, 545, 345, 545], [287, 745, 345, 745], [1143, 590, 1143, 705],
];
const circles = [
  [463, 518, 10], [552, 443, 8], [585, 520, 16], [590, 540, 19], [541, 770, 9], [575, 755, 24], [1085, 770, 9], [1050, 755, 24],
  [812, 830, 8], [812, 770, 19], [912, 772, 10], [1097, 635, 9], [1097, 635, 4], [450, 640, 27], [450, 620, 9], [447, 692, 10],
  [1012, 590, 6], [270, 455, 7], [237, 512, 6], [237, 800, 5], [750, 518, 6], [812, 518, 6], [874, 518, 6], [751, 342, 2.5],
  [812, 342, 2.5], [874, 342, 2.5], [751, 447, 2.5], [812, 447, 2.5], [874, 447, 2.5],
];
const labels = [
  { t: "1N", x: 503, y: 483 }, { t: "1W", x: 482, y: 778 }, { t: "1V", x: 745, y: 823 }, { t: "1U", x: 1107, y: 774 },
];

const Handle = ({ x, y, dark }: { x: number; y: number; dark?: boolean }) => (
  <ellipse cx={x} cy={y} rx={5} ry={5.5} fill="#4d87c9" stroke={dark ? "#2c3540" : "#6a7580"} strokeWidth="1.5" />
);

function Drawing() {
  return (
    <svg width={1784} height={1369} viewBox="411 293 1784 1369" className="block">
      <rect x="411" y="293" width="1784" height="1369" fill="#f3f1ea" />
      <g fill="none" stroke="#111" strokeWidth="1">
        {/* shell */}
        <path d="M411 334H1770V1619H411" stroke="#111" />
        <path d="M856 377.5H1727V1576H628V566H574V611H568V754H560V611" />
        <path d="M411 377.5H835V801H856V377.5" />
        <path d="M840 377.5V801" />
        <path d="M585 612V1576" />
        <path d="M411 566H423V612H411" />
        <path d="M416 566V612" />
        <path d="M568 611H585" />
        <path d="M423 612A137 142 0 0 0 560 754" />
        {/* doors */}
        <path d="M856 801A146 138 0 0 1 1002 939" />
        <path d="M856 939H1002V948H856" />
        <path d="M856 947H835V968H804V988H856" />
        <path d="M628 968H668M628 973H658V1135H628M628 989H668V1135" />
        <path d="M804 992A143 143 0 0 1 661 1135" />
        {/* stair */}
        <path d="M411 809H585" />
        <path d="M411 814H581M411 863H581M411 910H581M411 957H581M411 1003H581M411 1051H581M411 1098H581M411 1145H581M411 1192H581M411 1239H581M411 1286H581M411 1333H581M411 1380H581M411 1427H581M411 1474H581M411 1521H581" strokeDasharray="13 6" />
        <path d="M581 814V1574" strokeWidth="3.5" />
        <path d="M411 1574H582" strokeWidth="3.5" />
        <path d="M411 1568H577V814" />
        <path d={hatch} strokeWidth="0.9" />
      </g>
      {/* transformer */}
      <g fill="none" stroke="#111" strokeWidth="1">
        <rect x={tx(342)} y={ty(460)} width={(1137 - 342) / 2.24} height={(835 - 460) / 3} fill="#f3f1ea" strokeWidth="2" />
        {thinRects.map((r, i) => <path key={i} d={rectPath(r)} />)}
        {thinLines.map((l, i) => <path key={i} d={line(l)} />)}
        {thickLines.map((l, i) => <path key={i} d={line(l)} strokeWidth="2" />)}
        {circles.map(([x, y, r], i) => <circle key={i} cx={tx(x)} cy={ty(y)} r={r} />)}
        {finX.map((x) => <path key={x} d={`${line([x + 36, 315, x + 50, 315])}${line([x + 36, 981, x + 50, 981])}`} strokeWidth="2" />)}
      </g>
      <g fontFamily="'Liberation Sans', sans-serif" fontWeight="700" fontSize="10" fill="#111">
        {labels.map((l) => <text key={l.t} x={tx(l.x)} y={ty(l.y)}>{l.t}</text>)}
        <text transform={`translate(${tx(765)} ${ty(552)}) rotate(180)`}>2W</text>
        <text transform={`translate(${tx(825)} ${ty(552)}) rotate(180)`}>2V</text>
        <text transform={`translate(${tx(890)} ${ty(552)}) rotate(180)`}>2U</text>
      </g>
      {/* selected wall */}
      <rect x="856" y="967" width="871" height="21" fill="#7b97d3" stroke="#17398a" strokeWidth="1.5" />
      <path d="M856 970.5H1727" stroke="#17398a" />
      <path d="M411 334H1770M411 377.5H835M856 377.5H1727" stroke="#2f55a8" strokeWidth="1.5" fill="none" />
      {/* room tags */}
      <g fontFamily="'Liberation Sans', sans-serif" fontWeight="700" fontSize="35.4" fill="#0c0c0c" textAnchor="middle">
        <text x="1290" y="642">MAIN</text>
        <text x="1290" y="683">ELECTRICAL</text>
        <text x="1290" y="725">ROOM</text>
        <text x="828" y="1257">GENERATOR</text>
        <text x="828" y="1298">ROOM</text>
        <text x="392" y="1454" textAnchor="start">R 2</text>
      </g>
      {/* dimensions */}
      <g stroke="#a9bde6" strokeWidth="1.5" fill="none">
        <path d="M620 587H2132M856 690H1748M2118 587V978M856 690V978M1748 676V955" />
        <path d="M1727 978H2132" strokeWidth="2.5" />
        <path d="M2109 578 2128 599M1757 680 1739 705M866 680 848 700M2109 965 2128 988M866 735 845 760M856 735 838 755" />
      </g>
      <g fontFamily="'Liberation Sans', sans-serif" fontSize="17" fill="#2b55a8">
        <text x="814" y="739">0' - 2 7/16"</text>
        <text x="1248" y="684">17' - 3 209/256"</text>
        <text transform="translate(2110 816) rotate(-90)" fontSize="16">7' - 7"</text>
        <text transform="translate(2110 1018) rotate(-90)" fontSize="16">0' - 0 5/16"</text>
      </g>
      <Handle x={846} y={740} />
      <Handle x={856} y={850} />
      <ellipse cx={856} cy={978} rx={6} ry={7} fill="#5b8bc9" stroke="#6a7580" strokeWidth="1.5" />
      <ellipse cx={1748} cy={978} rx={6} ry={7} fill="#5b8bc9" stroke="#6a7580" strokeWidth="1.5" />
      <Handle x={1939} y={587} />
      <Handle x={1939} y={978} dark />
      {/* flip and temp dim controls */}
      <g stroke="#17398a" strokeWidth="1.8" fill="none">
        <path d="M914 893h7v20h-7zM921 899h12v7h-12z" />
        <path d="M1675 892h8v20h-8zM1683 898h11v7h-11z" />
        <path d="M1302 890v24M1298 894l4-6 4 6M1298 910l4 6 4-6" strokeWidth="1.2" />
        <path d="M845 765v16M867 765v16M845 773h22" strokeWidth="1.5" />
        <path d="M2135 973v16M2155 973v16M2135 981h20" strokeWidth="1.5" />
      </g>
      {/* nav bar */}
      <rect x="2146" y="312" width="46" height="148" rx="4" fill="#d6d5d0" stroke="#bdbcb6" />
      <circle cx="2166" cy="338" r="14" fill="none" stroke="#8e8e8a" strokeWidth="4" />
      <text x="2160" y="342" fontSize="11" fontFamily="'Liberation Sans', sans-serif" fill="#666">2D</text>
      <path d="M2164 366l4 5 4-5z" fill="#777" />
      <rect x="2154" y="392" width="24" height="24" fill="none" stroke="#999" strokeDasharray="3 2" />
      <path d="M2160 398l12 12" stroke="#666" strokeWidth="2" />
      <path d="M2164 430l4 5 4-5z" fill="#777" />
    </svg>
  );
}

function ViewBar() {
  return (
    <div className="flex h-[28px] shrink-0 border-b-[2px] border-[#2f3741] bg-[#3b444f]">
      <div className="flex w-[559px] shrink-0 items-center border-r border-[#2f3741] pl-[16px]">
        <span className="w-[90px] text-[16px] text-[#d6d6d6]">1/4" = 1'-0"</span>
        <span className="ml-[16px] flex items-center gap-[13px]">
          <Ic w={24} h={24}><rect x="0" y="0" width="24" height="24" fill="#9b9b9b" /><path d="M0 6h24M0 12h24M0 18h24M6 0v24M12 0v24M18 0v24" stroke="#777" strokeDasharray="2 2" /></Ic>
          <Ic w={26} h={24}><path d="M2 8l6-6h16v14l-6 6H2zM2 8h16v14M18 8l6-6" fill="none" stroke={G} /></Ic>
          <Ic w={26} h={24}><circle cx="8" cy="9" r="5" fill="#f0c26a" /><path d="M17 10c5 0 6 4 6 6s-2 3-2 4h-7c0-1-2-2-2-4s1-6 5-6z" fill="#66cbc5" /></Ic>
          <Ic w={26} h={24}><ellipse cx="9" cy="8" rx="7" ry="8" fill="#c8c8c4" /><path d="M18 12c4 0 5 3 5 5s-2 2-2 3h-6c0-1-2-1-2-3s1-5 5-5z" fill="#66cbc5" /><rect x="2" y="20" width="12" height="3" fill="#111" /></Ic>
          <Ic w={26} h={24}><path d="M3 23V11h14v4" fill="none" stroke={G} strokeWidth="3" /><path d="M4 23h5" stroke={B} strokeWidth="3" /><path d="M17 0v6" stroke={B} strokeWidth="2" /></Ic>
          <Ic w={26} h={24}><path d="M3 22V11h12" fill="none" stroke={G} strokeWidth="3" /><path d="M19 10c4 0 5 3 5 5s-2 2-2 3h-6c0-1-1-1-1-3s1-5 4-5z" fill="#66cbc5" /></Ic>
          <Ic w={22} h={20}><circle cx="6" cy="12" r="4.5" fill="none" stroke="#8a8a8a" strokeWidth="2" /><circle cx="16" cy="12" r="4.5" fill="none" stroke="#8a8a8a" strokeWidth="2" /><path d="M6 8l3-5M16 8l-3-5" stroke="#8a8a8a" /></Ic>
          <Ic w={16} h={26}><path d="M8 0c5 0 7 4 7 8s-3 6-3 8H4c0-2-4-4-4-8s3-8 8-8z" fill="#66cbc5" /><rect x="4" y="18" width="8" height="7" fill="#e6e6e6" /></Ic>
          <Ic w={24} h={24}><rect x="1" y="2" width="12" height="18" fill={G} /><path d="M15 2v20M20 2v20" stroke={G} strokeDasharray="2 2" /></Ic>
          <Ic w={24} h={26}><path d="M2 8l6-6h10v20H2z" fill="none" stroke={G} /><path d="M2 12h14v10H2z" fill="#a75c5c" /><circle cx="19" cy="17" r="5" fill="#f0c26a" /></Ic>
          <Ic w={24} h={26}><path d="M1 2h14M1 2v20M15 2v8" stroke={G} fill="none" /><path d="M16 10c4 0 6 3 6 5s-3 3-3 5h-6c0-2-2-3-2-5s1-5 5-5z" fill="#66cbc5" /></Ic>
          <span className="text-[20px] leading-none text-[#7f868f]">‹</span>
        </span>
      </div>
      <div className="flex flex-1 items-center bg-[#333b45]">
        <span className="ml-[587px] h-[10px] w-[26px] rounded-[5px] bg-[#6f7983]" />
        <span className="ml-auto mr-[9px] text-[20px] leading-none text-[#7f868f]">›</span>
      </div>
    </div>
  );
}

/* ---------- checker panel ---------- */
const StickFigure = () => (
  <svg width="22" height="26" viewBox="0 0 22 26" fill="none" stroke="#7e22ce" strokeWidth="2">
    <circle cx="11" cy="3.5" r="2.5" /><path d="M11 6v10M5 10h12M11 16l-5 9M11 16l5 9" />
  </svg>
);
const BuildingIcon = () => (
  <svg width="24" height="26" viewBox="0 0 24 26" fill="none" stroke="#1f5fbf" strokeWidth="2">
    <path d="M5 24V2h14v22M1 24h22M10 24v-5h4v5" />
    <path d="M9 6h2M13 6h2M9 10h2M13 10h2M9 14h2M13 14h2" />
  </svg>
);

const Badge = () => (
  <div className="flex h-[28px] w-[27px] shrink-0 items-center justify-center rounded-[6px] bg-[#374151]">
    <Landmark size={16} color="#f3f1ea" strokeWidth={1.6} />
  </div>
);

function IssueCard({ title, sub }: { title: string; sub?: string }) {
  return (
    <div className={`flex items-center rounded-[12px] border-[3px] border-l-[6px] border-[#d8d6d0] border-l-[#cf2424] bg-[#eeece6] pl-[12px] pr-[13px] ${sub ? "h-[89px]" : "h-[66px]"}`}>
      <Badge />
      <div className="ml-[9px] flex-1">
        <div className="text-[21px] font-medium leading-[28px] text-[#111827]">{title}</div>
        {sub && <div className="mt-[2px] text-[18px] leading-[26px] text-[#6b7280]">{sub}</div>}
      </div>
      <TriangleAlert size={21} color="#d23030" strokeWidth={1.6} />
      <ChevronDown size={22} color="#111827" strokeWidth={2.5} className="ml-[13px]" />
    </div>
  );
}

function Checker() {
  return (
    <div className="flex flex-1 flex-col bg-[#eeece6] pl-[3px]">
      <div className="mt-[12px] flex h-[61px] shrink-0 items-stretch">
        <div className="ml-[207px] flex w-[66px] flex-col items-center justify-center text-[#374151]">
          <House size={24} strokeWidth={1.5} /><span className="mt-[1px] text-[16px] font-medium leading-[22px]">Home</span>
        </div>
        <div className="ml-[11px] flex w-[92px] flex-col items-center justify-center rounded-[9px] border border-[#f3cfa8] bg-[#f7ebdd] text-[#d9601a]">
          <CircleCheck size={24} strokeWidth={1.6} /><span className="mt-[1px] text-[16px] font-medium leading-[22px]">Checker</span>
        </div>
        <div className="ml-[4px] flex w-[72px] flex-col items-center justify-center text-[#9ca3af]">
          <MessageCircleMore size={24} strokeWidth={1.5} /><span className="mt-[1px] text-[16px] font-medium leading-[22px]">Chat</span>
        </div>
      </div>
      <div className="ml-[12px] mr-[13px] mt-[25px] flex h-[1274px] shrink-0 flex-col rounded-[16px] border border-[#ebe9e2] bg-[#f3f1ea] px-[35px] pt-[36px]">
        <div className="flex h-[55px] items-center justify-between">
          <div className="flex h-[55px] w-[299px] items-center justify-between rounded-[10px] border-[1.5px] border-[#c9c9c9] pl-[18px] pr-[15px] text-[20.5px] text-[#111827]">
            CMYK<ChevronsUpDown size={20} color="#6b7280" strokeWidth={2} />
          </div>
          <div className="flex h-[48px] w-[137px] items-center justify-center rounded-[10px] bg-[#ec6f15] text-[20.5px] font-medium text-white">Run Check</div>
        </div>
        <div className="mt-[18px] grid h-[50px] grid-cols-4 gap-[10px] text-[20px] font-medium">
          <div className="flex items-center justify-center gap-[6px] rounded-[9px] border border-[#dedcd6]"><span className="text-[16px] font-normal text-[#4b5563]">Total</span><span className="text-[#111827]">933</span></div>
          <div className="flex items-center justify-center gap-[6px] rounded-[9px] border-[1.5px] border-[#cf2d2d] bg-[#f5e4df] text-[#c92a2a]"><TriangleAlert size={18} strokeWidth={1.7} />16</div>
          <div className="flex items-center justify-center gap-[6px] rounded-[9px] border border-[#dedcd6] text-[#e36a1e]"><CircleMinus size={18} strokeWidth={1.7} />424</div>
          <div className="flex items-center justify-center gap-[6px] rounded-[9px] border border-[#dedcd6] text-[#2f5fc9]"><CircleCheck size={18} strokeWidth={1.7} />493</div>
        </div>
        <div className="mt-[18px] flex gap-[12px]">
          <div className="flex h-[60px] w-[60px] items-center justify-center rounded-[10px] bg-[#ec6f15]"><Funnel size={24} color="#fff" strokeWidth={1.7} /></div>
          <div className="flex h-[60px] w-[60px] items-center justify-center rounded-[10px] border-[1.5px] border-[#b27fdc]"><StickFigure /></div>
          <div className="flex h-[60px] w-[60px] items-center justify-center rounded-[10px] border-[1.5px] border-[#d65050]"><Flame size={26} color="#c92a2a" strokeWidth={2} /></div>
          <div className="flex h-[60px] w-[60px] items-center justify-center rounded-[10px] border-[1.5px] border-[#4f84cf]"><BuildingIcon /></div>
          <div className="flex h-[60px] w-[60px] items-center justify-center rounded-[10px] border-[1.5px] border-[#e6bc3a]"><Zap size={24} color="#b8860b" strokeWidth={1.8} /></div>
          <div className="flex h-[60px] w-[60px] items-center justify-center rounded-[10px] border-[1.5px] border-[#4b5563]"><Landmark size={22} color="#374151" strokeWidth={1.6} /></div>
        </div>
        <div className="mt-[18px] flex h-[65px] items-center justify-between">
          <div className="flex h-[61px] w-[433px] items-center overflow-hidden whitespace-nowrap rounded-[10px] border-[1.5px] border-[#d2d0ca] pl-[25px] text-[24px] text-[#9a9a9a]">
            <span className="w-[385px] overflow-hidden">Search title, description, GUID or code</span>
          </div>
          <div className="flex h-[65px] w-[109px] items-center justify-center rounded-[10px] border-[3px] border-[#c9c9c9] text-[23.5px] font-medium text-[#1f2937]">Clear</div>
        </div>
        <div className="mt-[20px] flex h-[24px] items-center gap-[10px] text-[18px] text-[#6b7280]">
          <Clock size={17} strokeWidth={1.6} />Last run: Apr 24 at 7:37 AM (just now)
        </div>
        <div className="mt-[18px] flex flex-col gap-[13px]">
          <IssueCard title="Minimum Room Size" sub="Multiple (4 elements)" />
          <IssueCard title="Door Fire Rating Vs Wall Rating" sub="Multiple (2 elements)" />
          <div className="flex h-[367px] flex-col rounded-[12px] border-[3px] border-l-[6px] border-[#d8d6d0] border-l-[#cf2424] bg-[#eeece6] pl-[12px] pr-[13px]">
            <div className="flex h-[111px] shrink-0 items-center">
              <Badge />
              <div className="ml-[9px] flex-1">
                <div className="text-[21px] font-medium leading-[28px] text-[#111827]">Fire Separation Between Occupancies</div>
                <div className="mt-[2px] w-[420px] text-[18px] leading-[27px] text-[#6b7280]">GENERATOR ROOM (R-2) ↔ MAIN ELECTRICAL ROOM (S-2)</div>
              </div>
              <TriangleAlert size={21} color="#d23030" strokeWidth={1.6} className="mb-[10px]" />
              <ChevronUp size={22} color="#111827" strokeWidth={2.5} className="mb-[10px] ml-[13px]" />
            </div>
            <div className="h-[124px] shrink-0 rounded-[10px] border-2 border-[#f3bfbc] bg-[#f5e4df] pl-[25px] pr-[23px] pt-[24px] text-[18px] leading-[24px] text-[#8f1d1d]">
              <b className="font-bold">Explanation:</b> Separating wall between GENERATOR ROOM (R-2) ↔ MAIN ELECTRICAL ROOM (S-2) has no fire rating — requires 1 HR per IBC Table 508.4 (sprinklered)
            </div>
            <div className="mt-[11px] flex h-[46px] w-[163px] shrink-0 items-center justify-center rounded-[8px] border-[3px] border-[#c8c8c8] text-[19px] font-medium text-[#374151]">Show in Model</div>
            <div className="mt-[18px] flex h-[36px] items-center text-[20.5px] text-[#374151]">
              Code References
              <BookOpen size={20} color="#6b7280" strokeWidth={1.5} className="ml-[10px]" />
              <ChevronDown size={22} color="#111827" strokeWidth={2.5} className="ml-auto" />
            </div>
          </div>
          <IssueCard title="Egress Door Minimum Width" sub="Curtain Wall Dbl Glass:Curtain Wall Dbl Glass" />
          <IssueCard title="Minimum Plumbing Fixture Count" sub="Multiple (7 elements)" />
          <IssueCard title="Insufficient Occupancy Information" />
        </div>
      </div>
    </div>
  );
}

/* ---------- page ---------- */
const viewTabs = ["Level 1", "Basement 2", "Level 8", "Level 6", "Level 7", "Site", "Level 5"];

const DocIcon = ({ on }: { on?: boolean }) => (
  <Ic w={22} h={24}>
    <rect x="0" y="0" width="11" height="20" fill={on ? "#c4c4c4" : "#7e8287"} />
    <rect x="5" y="6" width="16" height="18" fill={on ? "#dedede" : "#8e9296"} />
    <path d="M11 2h4v4" stroke={on ? "#c4c4c4" : "#7e8287"} fill="none" />
  </Ic>
);

export default function App() {
  return (
    <div className="flex h-[1738px] w-[2880px] flex-col overflow-hidden bg-[#1f2631] font-[Roboto,sans-serif] text-[18px] text-[#d8d8d8]">
      <div className="flex h-[43px] shrink-0 items-center">
        <Qat />
        <div className="w-[412px] shrink-0" />
        <span className="w-[720px] shrink-0 whitespace-nowrap text-[#dedede]">Autodesk Revit 2026.4 - Kestrel DEMO-CMYK-Boutique Hotel_R26 - Floor Plan: Basement 2</span>
        <TopRight />
      </div>
      <RibbonTabs />
      <Ribbon />
      <div className="h-[2px] shrink-0 bg-[#242b30]" />
      <div className="flex h-[39px] shrink-0 items-center bg-[#3f4a47] pl-[13px] text-[17.5px]">Modify | Walls</div>
      <div className="h-[3px] shrink-0 bg-[#4a5662]" />

      <div className="flex min-h-0 flex-1">
        <div className="flex w-[405px] shrink-0 flex-col bg-[#3a434e]">
          <Properties />
          <Browser />
        </div>
        <div className="ml-[6px] flex w-[1812px] shrink-0 flex-col">
          <div className="flex h-[32px] shrink-0 items-stretch border-b-[2px] border-[#1f2631] bg-[#404a59] text-[18px]">
            {viewTabs.map((t) => (
              <div key={t} className={`flex items-center pl-[6px] ${t === "Basement 2" ? "w-[192px] bg-[#1f2631] pl-[8px] font-bold text-[#e8e8e8]" : t === "Level 1" ? "w-[189px] text-[#c8c8c8]" : "w-[192px] pl-[9px] text-[#c8c8c8]"}`}>
                <DocIcon on={t === "Basement 2"} />
                <span className="ml-[10px] flex-1">{t}</span>
                {t === "Basement 2" && <span className="mr-[5px]"><CloseX s={14} /></span>}
              </div>
            ))}
            <span className="ml-auto mr-[9px] self-center text-[11px] leading-none text-[#a5abb2]">▼</span>
          </div>
          <div className="flex min-h-0 flex-1">
            <div className="w-[1784px] shrink-0 overflow-hidden"><Drawing /></div>
            <div className="flex flex-1 flex-col items-center bg-[#2f3741]">
              <ChevronUp size={20} color="#7d858e" className="mt-[6px]" />
              <div className="mt-[640px] h-[25px] w-[11px] rounded-[5px] bg-[#6f7983]" />
              <ChevronDown size={20} color="#7d858e" className="mb-[2px] mt-auto" />
            </div>
          </div>
          <ViewBar />
        </div>
        <div className="ml-[3px] flex flex-1 flex-col">
          <div className="flex h-[26px] shrink-0 items-center justify-between pb-[2px] pl-[4px] pr-[1px] text-[17.5px] text-[#d8d8d8]">
            <span>Kestrel Labs</span><CloseX s={14} />
          </div>
          <Checker />
          <div className="h-[2px] shrink-0" />
        </div>
      </div>

      <div className="flex h-[39px] shrink-0 items-center bg-[#3b444f] pl-[2px] text-[17px] text-[#d6d6d6]">
        <span className="w-[1435px] shrink-0">Walls : Basic Wall : Concrete - 10"</span>
        <Ic w={24} h={24}><circle cx="12" cy="12" r="10" fill="#5fa463" /><path d="M4 8h8v8H4z" fill="#5a7fbf" /></Ic>
        <span className="ml-[315px] flex w-[34px] items-center gap-[3px] text-[#7f868f]">
          <Ic w={22} h={22}><path d="M1 21 8 8l8 8z" fill="#7f868f" /><circle cx="15" cy="7" r="4" fill="#7f868f" /></Ic>0
        </span>
        <Ic w={24} h={22} className="ml-[33px]"><rect x="0" y="0" width="24" height="22" fill="none" stroke={G} /><path d="M0 7h24M0 14h24" stroke={G} /></Ic>
        <Ic w={24} h={22} className="ml-[13px]"><rect x="0" y="0" width="24" height="22" fill="#6a727c" stroke="#7f868f" /><path d="M5 7h14M5 14h14" stroke="#333" /></Ic>
        <span className="ml-[21px] w-[633px] shrink-0 text-[#7f868f]">Main Model</span>
        <span className="flex items-center gap-[12px]">
          <Ic w={22} h={30}><path d="M1 4h16M4 8c-4 0-4-6 0-6h10c4 0 4 6 0 6" fill="none" stroke="#d6a468" strokeWidth="1.5" /><path d="M12 11l10 11h-5l2 7-3 1-3-7-3 4z" fill="#eee" /></Ic>
          <Ic w={24} h={30}><path d="M0 17 10 6l8 11zM4 20h10v3H4z" fill={B} /><path d="M14 11l8 10h-4l2 7-3 1-3-7-3 3z" fill="#eee" /><path d="M16 1l7 7m0-7-7 7" stroke="#e0605a" strokeWidth="2.5" /></Ic>
          <Ic w={24} h={30}><path d="M3 1h10l-2 10H6zM8 11v11" fill="#8a8f95" stroke="#8a8f95" /><path d="M12 11l9 11h-4l2 7-3 1-3-7-3 3z" fill="#eee" /></Ic>
          <Ic w={24} h={30}><path d="M0 8l10-6v20L0 29z" fill={B} /><path d="M10 11l9 11h-4l2 7-3 1-3-7-3 3z" fill="#eee" /><path d="M16 1l7 7m0-7-7 7" stroke="#e0605a" strokeWidth="2.5" /></Ic>
          <Ic w={24} h={30}><path d="M9 0v22M0 11h18" stroke="#eee" strokeWidth="1.5" /><path d="M12 13l8 9h-4l2 6-3 1-3-6-3 3z" fill="#eee" /><path d="M15 1l7 7m0-7-7 7" stroke="#e0605a" strokeWidth="2.5" /></Ic>
          <Ic w={24} h={24}><circle cx="12" cy="12" r="9" fill="none" stroke="#7f868f" strokeWidth="3.5" strokeDasharray="3 4" /></Ic>
          <span className="flex items-end">
            <Ic w={24} h={30}><path d="M0 1h24L15 14v15H9V14z" fill="#a3a6aa" /></Ic>
            <span className="text-[17px] leading-none">:1</span>
          </span>
        </span>
      </div>
      <div className="h-[2px] shrink-0 bg-[#20252b]" />
      <div className="h-[7px] shrink-0 bg-[#1c1710]" />
    </div>
  );
}
